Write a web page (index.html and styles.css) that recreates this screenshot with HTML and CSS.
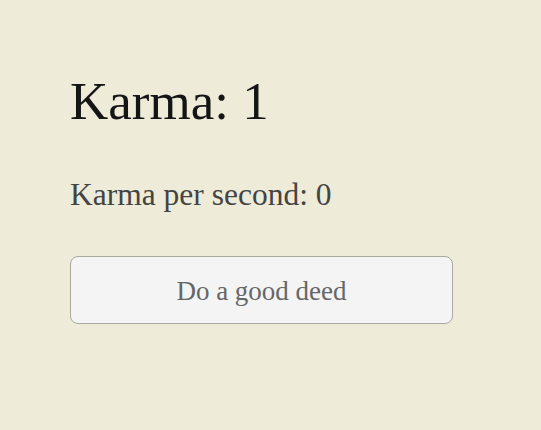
FILE: index.html
```html
<!DOCTYPE html>
<html lang="en">
<head>
    <meta charset="UTF-8">
    <meta name="viewport" content="width=device-width, initial-scale=1.0">
    <title>Karma</title>
    <link rel="stylesheet" href="styles.css">
</head>
<body>
    <div class="game">
        <h1 id="karma">Karma: 1</h1>
        <p id="rate">Karma per second: 0</p>
        <button class="deed" onclick="doDeed()">Do a good deed</button>
    </div>
    <script>
        let karma = 1;
        let perSecond = 0;

        function render() {
            document.getElementById('karma').textContent = 'Karma: ' + karma;
            document.getElementById('rate').textContent = 'Karma per second: ' + perSecond;
        }

        function doDeed() {
            karma += 1;
            render();
        }

        setInterval(() => {
            karma += perSecond;
            render();
        }, 1000);
    </script>
</body>
</html>
```

FILE: styles.css
```css
body {
    margin: 0;
    background: #eeecd9;
    font-family: "Liberation Serif", "DejaVu Serif", serif;
}
.game {
    display: flex;
    flex-direction: column;
    align-items: flex-start;
    padding: 69px 70px 0;
}
h1 {
    margin: 0;
    font-size: 53px;
    line-height: 64px;
    font-weight: normal;
    color: #151515;
}
p {
    margin: 44px 0 0;
    font-size: 31.5px;
    line-height: 36px;
    color: #444;
}
.deed {
    margin-top: 43px;
    width: 383px;
    height: 68px;
    padding-top: 4px;
    font-family: inherit;
    font-size: 27px;
    color: #666;
    background-color: #f4f4f4;
    border: 1px solid #a9a9a2;
    border-radius: 8px;
    cursor: pointer;
}
.deed:hover {
    background-color: #eaeaea;
}
```
